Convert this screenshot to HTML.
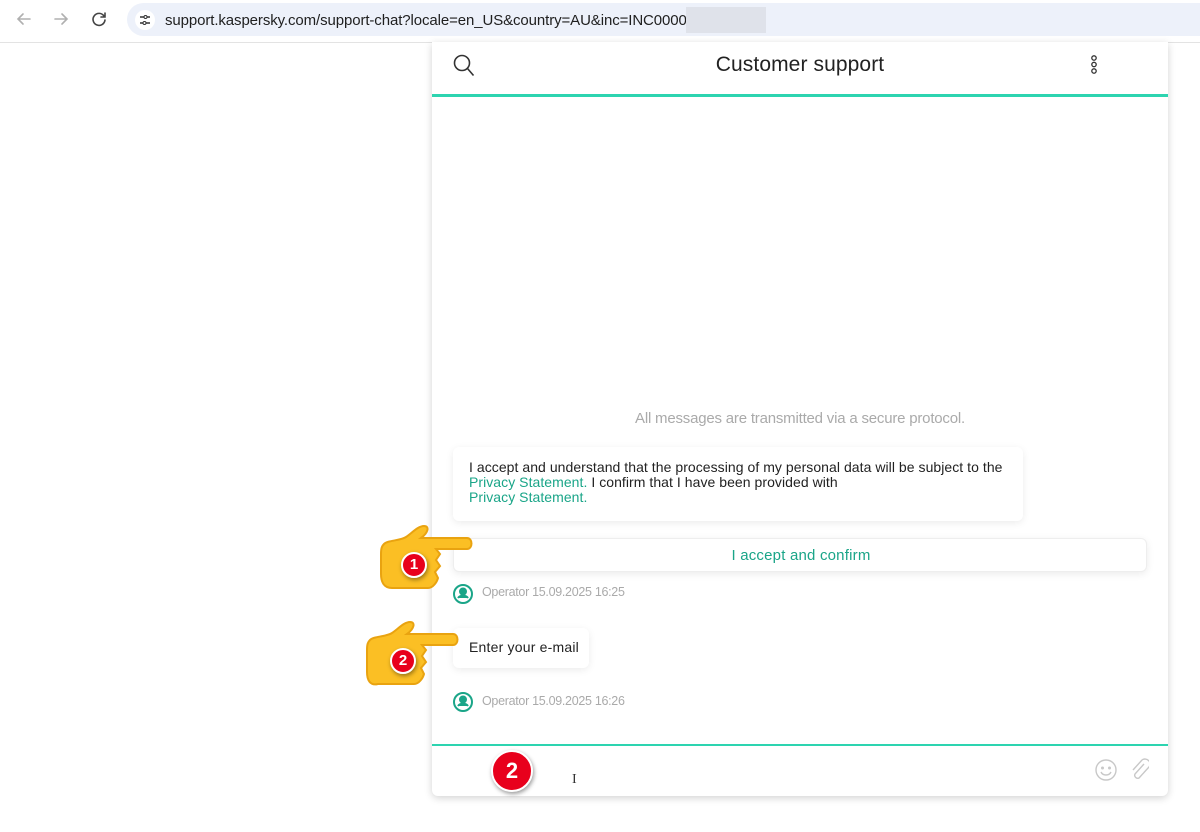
<!DOCTYPE html>
<html><head><meta charset="utf-8"><style>
*{margin:0;padding:0;box-sizing:border-box}
body{width:1200px;height:832px;background:#fff;font-family:"Liberation Sans",sans-serif;position:relative;overflow:hidden}
.bar{position:absolute;left:0;top:0;width:1200px;height:43px;background:#fff;border-bottom:1px solid #e3e3e3}
.url{position:absolute;left:127px;top:3px;width:1073px;height:33px;background:#edf1fa;border-radius:17px 0 0 17px}
.url span{position:absolute;left:38px;top:9px;font-size:15px;color:#1f1f1f;letter-spacing:-0.1px}
.panel{position:absolute;left:432px;top:42px;width:736px;height:754px;background:#fff;box-shadow:0 2px 8px rgba(0,0,0,.18);border-radius:0 0 6px 6px}
.t{position:absolute;white-space:nowrap}
.card{position:absolute;background:#fff;border-radius:6px;box-shadow:0 2px 8px rgba(0,0,0,.08)}
.g{color:#1aa588}
.sm{font-size:14px;letter-spacing:0.05px;color:#222;line-height:15px}
.op{font-size:12.5px;color:#aaa;letter-spacing:-0.3px}
.badge{position:absolute;border-radius:50%;background:#e8001c;color:#fff;font-weight:bold;text-align:center;border:2px solid #fff;box-shadow:1px 2px 4px rgba(0,0,0,.4)}
</style></head><body>
<div class="bar">
<svg class="t" style="left:14px;top:10px" width="100" height="18" fill="none" stroke-width="1.6" stroke-linecap="round">
<path d="M16 9H4M9 4L4 9l5 5" stroke="#b0b0b0"/>
<path d="M41 9h12M48 4l5 5-5 5" stroke="#b0b0b0"/>
<path d="M90 6a6 6 0 1 0 1 4M91 3v4h-4" stroke="#444"/>
</svg>
<div class="url"><svg class="t" style="left:8px;top:7px" width="20" height="20"><circle cx="10" cy="10" r="10" fill="#fff"/><path d="M5 7h4M12 7h3M5 13h3M11 13h4" stroke="#333" stroke-width="1.5"/><circle cx="10.5" cy="7" r="1.5" fill="none" stroke="#333"/><circle cx="9.5" cy="13" r="1.5" fill="none" stroke="#333"/></svg>
<span>support.kaspersky.com/support-chat?locale=en_US&amp;country=AU&amp;inc=INC0000</span>
<div class="t" style="left:559px;top:4px;width:80px;height:26px;background:#dfe2ea"></div></div>
</div>
<div class="panel">
<svg class="t" style="left:20px;top:12px" width="26" height="24" fill="none" stroke="#333" stroke-width="1.6"><circle cx="10" cy="9" r="7.5"/><path d="M15.5 14.5l6 7"/></svg>
<div class="t" style="left:0;width:736px;top:11px;text-align:center;font-size:21px;color:#222;letter-spacing:0.1px">Customer support</div>
<svg class="t" style="left:657px;top:12px" width="10" height="22" fill="none" stroke="#333" stroke-width="1.3"><circle cx="5" cy="4" r="2.2"/><circle cx="5" cy="10.5" r="2.2"/><circle cx="5" cy="17" r="2.2"/></svg>
<div class="t" style="left:0;top:52px;width:736px;height:3px;background:#2dd4b0"></div>
<div class="t" style="left:0;width:736px;top:368px;text-align:center;font-size:15px;color:#aaa;letter-spacing:-0.2px">All messages are transmitted via a secure protocol.</div>
<div class="card" style="left:21px;top:405px;width:570px;height:74px"><div class="t sm" style="left:16px;top:13px">I accept and understand that the processing of my personal data will be subject to the<br><span class="g">Privacy Statement.</span> I confirm that I have been provided with<br><span class="g">Privacy Statement.</span></div></div>
<div class="card" style="left:21px;top:496px;width:694px;height:34px;border:1px solid #eee"><div class="t g" style="left:0;width:694px;top:8px;text-align:center;font-size:15px;letter-spacing:0.2px">I accept and confirm</div></div>
<svg class="t" style="left:20px;top:541px" width="22" height="22" fill="none" stroke="#1aa588" stroke-width="2"><circle cx="11" cy="11" r="9"/><circle cx="11" cy="8.5" r="3" fill="#1aa588"/><path d="M6 15c2-3 8-3 10 0" fill="#1aa588"/></svg>
<div class="t op" style="left:50px;top:543px">Operator 15.09.2025 16:25</div>
<div class="card" style="left:21px;top:586px;width:136px;height:40px"><div class="t sm" style="left:16px;top:12px;font-size:14px;letter-spacing:0.2px">Enter your e-mail</div></div>
<svg class="t" style="left:20px;top:649px" width="22" height="22" fill="none" stroke="#1aa588" stroke-width="2"><circle cx="11" cy="11" r="9"/><circle cx="11" cy="8.5" r="3" fill="#1aa588"/><path d="M6 15c2-3 8-3 10 0" fill="#1aa588"/></svg>
<div class="t op" style="left:50px;top:652px">Operator 15.09.2025 16:26</div>
<div class="t" style="left:0;top:702px;width:736px;height:2px;background:#2dd4b0"></div>
<div class="t" style="left:140px;top:730px;font-size:14px;color:#333;font-family:'Liberation Serif',serif">I</div>
<svg class="t" style="left:663px;top:716px" width="54" height="24" fill="none" stroke="#c8c8c8" stroke-width="1.4"><circle cx="11" cy="12" r="10"/><circle cx="7.5" cy="10" r=".8"/><circle cx="14.5" cy="10" r=".8"/><path d="M6 14c2 4 8 4 10 0"/><path d="M49 6l-9 10a3 3 0 0 0 4 4l10-11a5 5 0 0 0-7-7l-9 10"/></svg>
</div>
<svg class="t" style="left:378px;top:522px" width="102" height="76"><path d="M6 22c4-4 16-3 22-7 6-4 12-11 18-11 6 0 4 7-3 12h46c6 0 6 11 0 11H58l4 5-4 6 4 6-5 6 3 6c-1 4-5 10-10 10H14C6 66 3 60 3 52V32c0-6 1-8 3-10z" fill="#fbbf24" stroke="#e9a310" stroke-width="2"/></svg>
<div class="badge" style="left:401px;top:552px;width:26px;height:26px;font-size:15px;line-height:22px">1</div>
<svg class="t" style="left:364px;top:616px" width="102" height="76"><path d="M6 24c4-4 16-3 22-7 6-4 12-11 18-11 6 0 4 7-3 12h46c6 0 6 11 0 11H58l4 5-4 6 4 6-5 6 3 6c-1 4-5 10-10 10H14C6 70 3 64 3 56V34c0-6 1-8 3-10z" fill="#fbbf24" stroke="#e9a310" stroke-width="2"/></svg>
<div class="badge" style="left:390px;top:648px;width:26px;height:26px;font-size:15px;line-height:22px">2</div>
<div class="badge" style="left:491px;top:750px;width:42px;height:42px;font-size:22px;line-height:38px">2</div>
</body></html>
